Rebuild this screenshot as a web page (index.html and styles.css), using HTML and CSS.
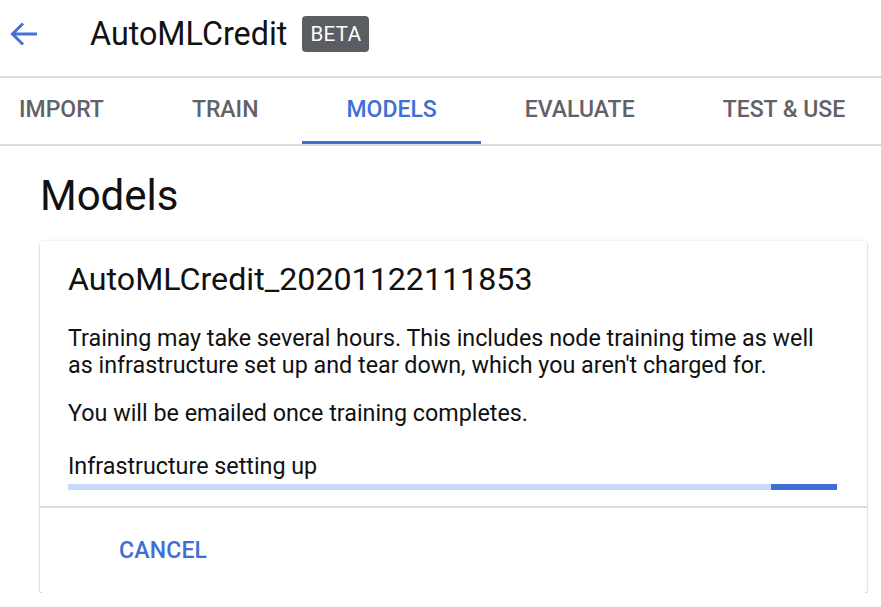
FILE: index.html
```html
<!DOCTYPE html>
<html>
<head>
<meta charset="utf-8">
<link rel="stylesheet" href="styles.css">
</head>
<body>
<header class="topbar">
  <svg class="back" width="30" height="26" viewBox="0 0 30 26"><path d="M28 13H4M14 2.5L3.5 13L14 23.5" fill="none" stroke="#4472d6" stroke-width="3" stroke-linecap="butt"/></svg>
  <span class="app-title">AutoMLCredit</span>
  <span class="badge">BETA</span>
</header>
<nav class="tabs">
  <span class="tab">IMPORT</span>
  <span class="tab">TRAIN</span>
  <span class="tab active">MODELS</span>
  <span class="tab">EVALUATE</span>
  <span class="tab">TEST &amp; USE</span>
</nav>
<main class="content">
  <h1 class="page-title">Models</h1>
  <section class="card">
    <div class="card-body">
      <h2 class="model-name">AutoMLCredit_20201122111853</h2>
      <p class="text">Training may take several hours. This includes node training time as well as infrastructure set up and tear down, which you aren't charged for.</p>
      <p class="text">You will be emailed once training completes.</p>
      <div class="status">Infrastructure setting up</div>
      <div class="progress"><div class="progress-fill"></div></div>
    </div>
    <div class="card-actions">
      <span class="btn">CANCEL</span>
    </div>
  </section>
</main>
</body>
</html>
```
FILE: styles.css
```css
* { box-sizing: border-box; }
body {
  margin: 0;
  font-family: Roboto, "Liberation Sans", sans-serif;
  color: #111;
  background: #fff;
  overflow: hidden;
}
.topbar {
  height: 78px;
  display: flex;
  align-items: center;
  padding-left: 9px;
  padding-bottom: 8px;
  border-bottom: 2px solid #dcdcdc;
}
.back { display: block; }
.app-title {
  margin-left: 51px;
  font-size: 32.3px;
  color: #111;
}
.badge {
  margin-left: 15px;
  background: #5a5e62;
  color: #fff;
  font-size: 20.5px;
  border-radius: 4px;
  padding: 0 8px;
  height: 36px;
  line-height: 36px;
  letter-spacing: 0.4px;
}
.tabs {
  display: flex;
  margin-left: -25px;
  height: 68px;
  border-bottom: 2px solid #dcdcdc;
  white-space: nowrap;
}
.tab {
  flex: none;
  padding: 0 44px;
  line-height: 64px;
  font-size: 23px;
  font-weight: 500;
  color: #5f6368;
  border-bottom: 3px solid transparent;
}
.tab.active {
  color: #3f6fd6;
  border-bottom-color: #3f6fd6;
}
.content {
  padding: 0 14px 0 40px;
}
.page-title {
  margin: 26px 0 0 0;
  font-size: 42px;
  font-weight: 400;
  line-height: 48px;
  height: 69px;
}
.card {
  width: 827px;
  background: #fff;
  border-radius: 3px;
  box-shadow: 0 2px 2px rgba(0,0,0,0.28), 0 0 3px rgba(0,0,0,0.12);
}
.card-body {
  padding: 20px 30px 16px 28px;
}
.model-name {
  margin: 0;
  font-size: 32.2px;
  font-weight: 400;
  line-height: 36px;
}
.text {
  margin: 0;
  font-size: 23.3px;
  line-height: 27px;
}
.model-name + .text { margin-top: 28px; }
.text + .text { margin-top: 21px; }
.status {
  margin-top: 26px;
  font-size: 23.3px;
  line-height: 27px;
}
.progress {
  margin-top: 4px;
  height: 6px;
  background: #c8dafa;
  display: flex;
  justify-content: flex-end;
}
.progress-fill {
  width: 66px;
  background: #3f6fd6;
}
.card-actions {
  border-top: 2px solid #dcdcdc;
  height: 87px;
  display: flex;
  align-items: center;
  padding-left: 79px;
}
.btn {
  font-size: 23px;
  font-weight: 500;
  color: #3f6fd6;
  letter-spacing: 0.2px;
}
```
